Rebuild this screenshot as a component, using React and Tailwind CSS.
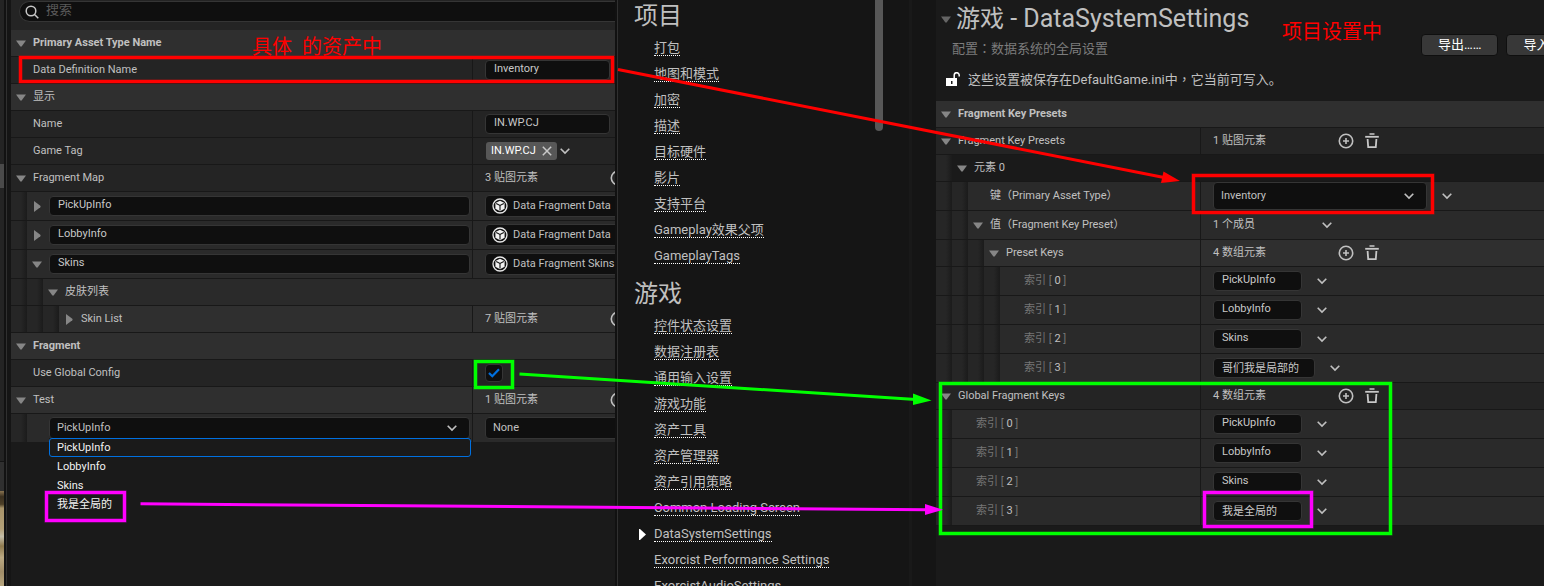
import React from "react";

const LEFT_COL = "w-[462px]";
const RIGHT_COL = "w-[265px]";

/* ---------- icons ---------- */

function Expander({ open }) {
  return open ? (
    <svg width="10" height="7" viewBox="0 0 10 7" className="ml-[5px] fill-[#868686]">
      <path d="M0 .5h10L5.800 6.300Q5 7 4.200 6.300Z" />
    </svg>
  ) : (
    <svg width="7" height="11" viewBox="0 0 7 11" className="ml-[7px] fill-[#868686]">
      <path d="M0 0v11L6.300 6.200Q7 5.500 6.300 4.800Z" />
    </svg>
  );
}

function Chevron({ className = "" }) {
  return (
    <svg width="10" height="8" viewBox="0 0 10 8" fill="none" stroke="#c0c0c0" strokeWidth="1.600" className={"shrink-0 " + className}>
      <path d="M.7 1.700 5 6l4.300-4.300" />
    </svg>
  );
}

function PlusCircle() {
  return (
    <svg width="16" height="16" viewBox="0 0 16 16" fill="none" stroke="#c0c0c0" strokeWidth="1.600">
      <circle cx="8" cy="8" r="6.700" />
      <path d="M8 5v6M5 8h6" />
    </svg>
  );
}

function Trash() {
  return (
    <svg width="16" height="16" viewBox="0 0 16 16" fill="none" stroke="#c8c8c8">
      <path d="M5.500 1h5" strokeWidth="1.500" />
      <path d="M1.200 3.800h13.600" strokeWidth="1.800" />
      <path d="M3.600 6 4.200 14.200h7.600L12.400 6" strokeWidth="1.800" />
    </svg>
  );
}

function StructIcon() {
  return (
    <svg width="16" height="16" viewBox="0 0 16 16" className="pointer-events-none ml-[7px] [grid-area:1/1]">
      <circle cx="8" cy="8" r="7" fill="none" stroke="#e8e8e8" strokeWidth="1.300" />
      <path d="M8 2.700 12.600 5v5.700L8 13.300 3.400 10.700V5Z" fill="#f2f2f2" />
      <path d="M4.200 5.600 8 7.500l3.800-1.900M8 7.500v5" fill="none" stroke="#0f0f0f" strokeWidth="1.100" />
    </svg>
  );
}

/* ---------- property rows ---------- */

function Row({ indent = 0, open, label, col, bg = "bg-[#242424]", h = "h-[27px]", line = "border-b", bold, htmlFor, children }) {
  const text = "whitespace-pre " + (bold ? "font-bold" : "");
  return (
    <div className={`flex ${h} ${line} border-[#181818] ${bg}`}>
      <div className={`flex shrink-0 items-center ${children ? col + " border-r border-[#181818]" : "grow"}`}>
        {Array.from({ length: indent }, (_, i) => (
          <div key={i} className="w-4 shrink-0 self-stretch bg-[linear-gradient(to_right,#262626_62%,#1b1b1b)]" />
        ))}
        <div className="w-[22px] shrink-0">{open === undefined ? null : <Expander open={open} />}</div>
        {typeof label !== "string" ? label : htmlFor ? (
          <label htmlFor={htmlFor} className={text}>{label}</label>
        ) : (
          <span className={text}>{label}</span>
        )}
      </div>
      {children && <div className="flex min-w-0 grow items-center overflow-hidden pl-3">{children}</div>}
    </div>
  );
}

function TextBox({ w, value, label, id }) {
  return (
    <input
      id={id}
      aria-label={id ? undefined : label}
      defaultValue={value}
      className={`h-5 shrink-0 rounded-[4px] border border-[#353535] bg-[#0f0f0f] pb-[3px] pl-2 text-[#c8c8c8] outline-none ${w}`}
    />
  );
}

function Count({ text, trash = true }) {
  return (
    <>
      <span className="w-[125px] shrink-0">{text}</span>
      <button aria-label="添加元素" className="shrink-0"><PlusCircle /></button>
      {trash && <button aria-label="清空" className="ml-[10px] shrink-0"><Trash /></button>}
    </>
  );
}

function Combo({ w, h = "h-[22px]", value, label, struct }) {
  return (
    <div className={`grid shrink-0 items-center ${w}`}>
      <select
        aria-label={label}
        className={`appearance-none rounded-[4px] border border-[#353535] bg-[#0f0f0f] text-[#c0c0c0] outline-none [grid-area:1/1] ${h} ${struct ? "pl-[27px]" : "pl-[7px]"}`}
      >
        <option>{value}</option>
      </select>
      {struct && <StructIcon />}
      <Chevron className="pointer-events-none mr-[13px] justify-self-end [grid-area:1/1]" />
    </div>
  );
}

function IndexLabel({ n }) {
  return (
    <span className="whitespace-pre pl-[2px] text-[#757575]">
      索引 [ <span className="text-[#c0c0c0]">{n}</span> ]
    </span>
  );
}

function KeyRows({ indent, keys, name }) {
  return keys.map((k, i) => (
    <Row key={k} indent={indent} label={<IndexLabel n={i} />} col={RIGHT_COL} h="h-[29px]" bg="bg-[#2a2a2a]">
      <TextBox w={k.length === 7 ? "w-[102px]" : "w-[89px]"} value={k} label={`${name} ${i}`} />
      <button aria-label="元素选项" className="ml-[15px]"><Chevron /></button>
    </Row>
  ));
}

/* ---------- panels ---------- */

function EdgeStrip() {
  return (
    <div className="flex w-[11px] shrink-0 border-r-[4px] border-[#151515]">
      <div className="flex w-1 flex-col bg-[#242424]">
        <div className="h-[164px]" />
        <div className="h-6 bg-[#4a4a4a]" />
        <div className="h-[273px]" />
        <div className="h-[30px] border-t border-[#151515] bg-[#2f2f2f]" />
        <div className="grow bg-[linear-gradient(#8a7450,#3b3020_6%,#4d4028_14%,#a8946a_18%,#b3a078_40%,#c3bda8_48%,#8e7a4e_58%,#bba983_70%,#a08d68_85%,#b8a780)]" />
      </div>
      <div className="w-[2px] bg-[#121212]" />
      <div className="w-px bg-[#303030]" />
    </div>
  );
}

function AssetPanel() {
  const fragments = [
    ["PickUpInfo", "Data Fragment Data", false],
    ["LobbyInfo", "Data Fragment Data", false],
    ["Skins", "Data Fragment Skins", true],
  ];
  return (
    <section className="w-[604px] shrink-0 overflow-hidden bg-[#1a1a1a]">
      <div className="flex h-[30px] items-start bg-[#242424] pl-2 pt-px">
        <label className="flex h-[21px] grow items-center rounded-l-full border border-r-0 border-[#353535] bg-[#0f0f0f] pl-[5px]">
          <svg width="14" height="14" viewBox="0 0 14 14" fill="none" stroke="#c8c8c8" strokeWidth="1.500">
            <circle cx="6" cy="6" r="4.800" />
            <path d="m9.500 9.500 3.800 3.800" />
          </svg>
          <input aria-label="搜索" placeholder="搜索" className="ml-[7px] h-4 grow bg-transparent pb-[3px] text-[13px] outline-none placeholder:text-[#5a5a5a]" />
        </label>
      </div>

      <Row open label="Primary Asset Type Name" bold bg="bg-[#2f2f2f]" />
      <Row label="Data Definition Name" htmlFor="def-name" col={LEFT_COL}>
        <TextBox id="def-name" w="w-[125px]" value="Inventory" />
      </Row>
      <Row open label="显示" bg="bg-[#2f2f2f]" />
      <Row label="Name" htmlFor="asset-name" col={LEFT_COL}>
        <TextBox id="asset-name" w="w-[125px]" value="IN.WP.CJ" />
      </Row>
      <Row label="Game Tag" col={LEFT_COL}>
        <span className="ml-px flex h-[18px] items-center gap-[6px] rounded-[3px] bg-[#575757] px-[5px] text-white">
          IN.WP.CJ
          <button aria-label="移除标签">
            <svg width="10" height="10" viewBox="0 0 10 10" stroke="#c8c8c8" strokeWidth="1.500">
              <path d="m.8.8 8.400 8.400M9.200.8.8 9.200" />
            </svg>
          </button>
        </span>
        <button aria-label="标签选项" className="ml-[3px]"><Chevron /></button>
      </Row>
      <Row open label="Fragment Map" col={LEFT_COL}>
        <Count text="3 贴图元素" trash={false} />
      </Row>
      {fragments.map(([key, type, open]) => (
        <Row
          key={key}
          indent={1}
          open={open}
          h="h-[29px]"
          bg="bg-[#2a2a2a]"
          col={LEFT_COL}
          label={<TextBox w="w-[421px]" value={key} label="Fragment key" />}
        >
          <Combo w="w-[200px]" value={type} label={`${key} type`} struct />
        </Row>
      ))}
      <Row indent={2} open label="皮肤列表" bg="bg-[#2a2a2a]" />
      <Row indent={3} open={false} label="Skin List" bg="bg-[#2f2f2f]" col={LEFT_COL}>
        <Count text="7 贴图元素" trash={false} />
      </Row>
      <Row open label="Fragment" bold bg="bg-[#2f2f2f]" />
      <Row label="Use Global Config" htmlFor="use-global" col={LEFT_COL}>
        <span className="grid place-items-center">
          <input
            id="use-global"
            type="checkbox"
            defaultChecked
            className="peer size-[18px] appearance-none rounded-[4px] border border-[#353535] bg-[#0f0f0f] [grid-area:1/1]"
          />
          <svg width="12" height="10" viewBox="0 0 12 10" fill="none" stroke="#0070e0" strokeWidth="2.200" className="pointer-events-none invisible [grid-area:1/1] peer-checked:visible">
            <path d="m1 5 3.300 3.300L11 1.300" />
          </svg>
        </span>
      </Row>
      <Row open label="Test" bg="bg-[#2f2f2f]" col={LEFT_COL}>
        <Count text="1 贴图元素" trash={false} />
      </Row>
      <Row
        indent={1}
        h="h-7"
        line=""
        bg="bg-[#2a2a2a]"
        col={LEFT_COL}
        label={
          <div className="relative">
            <Combo w="w-[421px]" value="PickUpInfo" label="Test key" />
            <ul className="absolute left-0 top-[21px] z-10 w-[422px] bg-[#1a1a1a] text-[#f2f2f2]">
              {["PickUpInfo", "LobbyInfo", "Skins", "我是全局的"].map((o, i) => (
                <li key={o} className={`flex h-[19px] items-center rounded-[3px] border pl-[7px] ${i ? "border-transparent" : "border-[#0070e0]"}`}>
                  {o}
                </li>
              ))}
            </ul>
          </div>
        }
      >
        <Combo w="w-[200px]" value=" None" label="Test value" />
      </Row>
    </section>
  );
}

function NavGroup({ title, items, active, head }) {
  return (
    <div>
      <h2 className={`flex items-center pl-4 text-[24px] ${head}`}>{title}</h2>
      <ul>
        {items.map((t) => (
          <li key={t} className="flex h-[26px] items-center">
            <span className="w-9 shrink-0 pl-[21px]">
              {t === active && (
                <svg width="7" height="11" viewBox="0 0 7 11" fill="#fff">
                  <path d="M0 0h1L7 5.500 1 11H0Z" />
                </svg>
              )}
            </span>
            <a href="#" className="h-4 whitespace-nowrap border-b border-dotted border-white text-[13px] leading-[15px]">{t}</a>
          </li>
        ))}
      </ul>
    </div>
  );
}

function SettingsNav() {
  return (
    <nav className="flex w-[321px] shrink-0 overflow-hidden border-l-2 border-[#111] bg-[#151515]">
      <div className="w-px shrink-0 bg-[#303030]" />
      <div className="w-[257px] shrink-0">
        <NavGroup
          title="项目"
          head="h-[35px] pb-1"
          items={["打包", "地图和模式", "加密", "描述", "目标硬件", "影片", "支持平台", "Gameplay效果父项", "GameplayTags"]}
        />
        <NavGroup
          title="游戏"
          head="h-11 pt-[6px]"
          active="DataSystemSettings"
          items={[
            "控件状态设置", "数据注册表", "通用输入设置", "游戏功能", "资产工具", "资产管理器", "资产引用策略",
            "Common Loading Screen", "DataSystemSettings", "Exorcist Performance Settings", "ExorcistAudioSettings",
          ]}
        />
      </div>
      <div className="h-[131px] w-2 rounded-b-full bg-[#575757]" />
      <div className="ml-[26px] w-[3px] bg-[#191919]" />
    </nav>
  );
}

function ToolButton({ children }) {
  return (
    <button className="h-[22px] shrink-0 whitespace-nowrap rounded-[4px] border border-[#0f0f0f] bg-[#383838] px-4 text-[13px] text-white">
      {children}
    </button>
  );
}

function SettingsPanel() {
  const tc = "font-['Noto_Sans_CJK_TC',sans-serif]";
  return (
    <main className="min-w-0 grow overflow-hidden bg-[#1a1a1a]">
      <header className="h-[101px]">
        <div className="flex h-[61px] pt-1">
          <div className="w-[485px] shrink-0">
            <h1 className="flex h-[30px] items-center gap-[5px] whitespace-pre text-[24px]">
              <span className="opacity-70"><Expander open /></span>
              <span>游戏<span className="text-[25px]"> - DataSystemSettings</span></span>
            </h1>
            <p className="pl-4 pt-[5px] text-[13px] leading-[18px] text-[#7c7c7c]">
              配置<span className={tc}>：</span>数据系统的全局设置
            </p>
          </div>
          <div className="flex gap-2 pt-[30px]">
            <ToolButton>导出……</ToolButton>
            <ToolButton>导入……</ToolButton>
          </div>
        </div>
        <p className="flex h-9 items-center gap-2 whitespace-nowrap pl-[10px] text-[13px]">
          <svg width="14" height="14" viewBox="0 0 14 14">
            <path d="M0 6h11v8H0Z" fill="#fff" />
            <path d="M5 9h1.500v3H5Z" fill="#1a1a1a" />
            <path d="M8.200 6V3.200a2.500 2.500 0 0 1 5 0V4.500" fill="none" stroke="#fff" strokeWidth="1.500" />
          </svg>
          <span>这些设置被保存在DefaultGame.ini中<span className={tc}>，</span>它当前可写入。</span>
        </p>
      </header>

      <Row open label="Fragment Key Presets" bold bg="bg-[#2f2f2f]" />
      <Row open label="Fragment Key Presets" col={RIGHT_COL}>
        <Count text="1 贴图元素" />
      </Row>
      <Row indent={1} open label="元素 0" bg="bg-[#1a1a1a]" />
      <Row indent={2} label="键（Primary Asset Type）" bg="bg-[#2a2a2a]" h="h-[29px]" col={RIGHT_COL}>
        <Combo w="w-[214px]" h="h-7" value="Inventory" label="键（Primary Asset Type）" />
        <button aria-label="键选项" className="ml-[15px]"><Chevron /></button>
      </Row>
      <Row indent={2} open label="值（Fragment Key Preset）" bg="bg-[#2a2a2a]" h="h-[29px]" col={RIGHT_COL}>
        <span className="w-[109px]">1 个成员</span>
        <button aria-label="值选项"><Chevron /></button>
      </Row>
      <Row indent={3} open label="Preset Keys" bg="bg-[#2f2f2f]" col={RIGHT_COL}>
        <Count text="4 数组元素" />
      </Row>
      <KeyRows indent={4} name="Preset Keys" keys={["PickUpInfo", "LobbyInfo", "Skins", "哥们我是局部的"]} />
      <Row open label="Global Fragment Keys" col={RIGHT_COL}>
        <Count text="4 数组元素" />
      </Row>
      <KeyRows indent={1} name="Global Fragment Keys" keys={["PickUpInfo", "LobbyInfo", "Skins", "我是全局的"]} />
    </main>
  );
}

/* ---------- annotations drawn over the editor ---------- */

const BOXES = [
  ["#ff0000", 20, 57, 592, 24],
  ["#ff0000", 1193, 175, 239, 37],
  ["#00ff00", 475, 361, 37, 26],
  ["#00ff00", 940, 383, 450, 150],
  ["#ff00ff", 46, 492, 78, 28],
  ["#ff00ff", 1204, 492, 107, 34],
];

const ARROWS = [
  ["#ff0000", "M618 69.500 1164 177.500", "1161,183 1163.500,171.500 1180,181"],
  ["#00ff00", "M519.500 374 916 399.500", "913,405 913,393.500 931.500,400.500"],
  ["#ff00ff", "M140.500 503.800 928 509.700", "925,515 925,504 943,509.800"],
];

function Annotations() {
  return (
    <div className="pointer-events-none absolute left-0 top-0 z-20">
      <svg width="1544" height="586" viewBox="0 0 1544 586" fill="none">
        {BOXES.map(([c, x, y, w, h]) => (
          <g key={`${x}-${y}`} stroke={c}>
            <rect x={x + 0.5} y={y + 0.5} width={w} height={h} strokeWidth="4" strokeOpacity=".5" />
            <rect x={x + 0.5} y={y + 0.5} width={w} height={h} strokeWidth="3" />
          </g>
        ))}
        {ARROWS.map(([c, line, head]) => (
          <g key={line}>
            <path d={line} stroke={c} strokeWidth="3" />
            <polygon points={head} fill={c} />
          </g>
        ))}
      </svg>
      <span className="absolute left-[252px] top-[35px] whitespace-pre text-[20px] leading-6 text-[#ff0000]">具体  的资产中</span>
      <span className="absolute left-[1282px] top-5 whitespace-nowrap text-[20px] leading-6 text-[#ff0000]">项目设置中</span>
    </div>
  );
}

export default function App() {
  return (
    <div className="relative flex h-screen overflow-hidden bg-[#151515] font-[Roboto,'Noto_Sans_CJK_SC',sans-serif] text-[11px] leading-4 text-[#c0c0c0]">
      <EdgeStrip />
      <AssetPanel />
      <SettingsNav />
      <SettingsPanel />
      <Annotations />
    </div>
  );
}
